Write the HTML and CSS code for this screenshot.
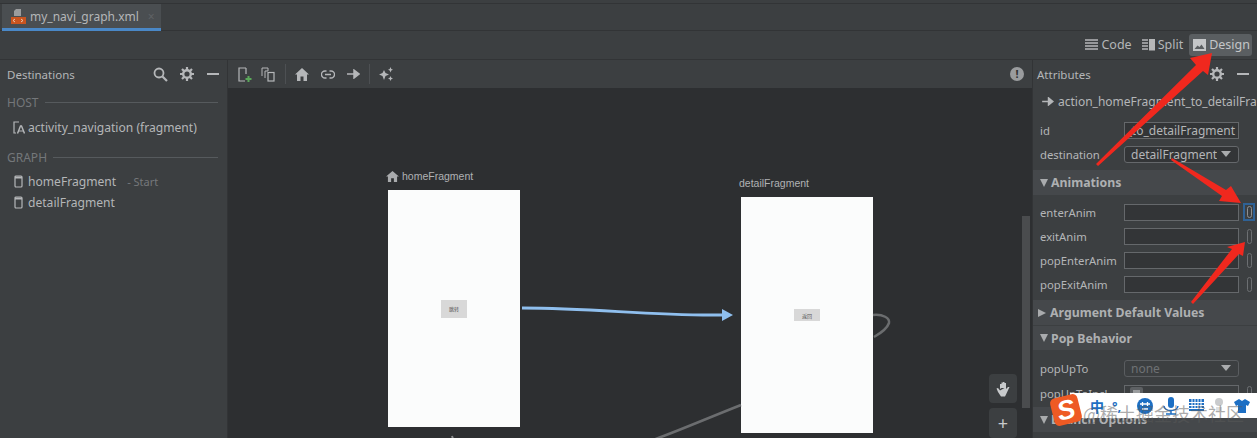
FILE: index.html
```html
<!DOCTYPE html>
<html lang="en">

<head>
    <meta charset="UTF-8">
    <meta name="viewport" content="width=device-width, initial-scale=1.0">
    <title>my_navi_graph.xml</title>
    <link rel="stylesheet" href="styles.css">
</head>

<body>
    <div class="tabbar">
        <div class="tab">
            <svg class="tab-icon" width="16" height="16" viewBox="0 0 16 16">
                <path d="M6 1h5v7H4V3z" fill="#9a9c9e" />
                <rect x="1" y="9" width="15" height="7" fill="#c9541f" />
                <path d="M5 11l-2 1.500L5 14M11 11l2 1.500L11 14" stroke="#e8c9b0" fill="none" />
            </svg>
            <span>my_navi_graph.xml</span>
            <span class="tab-close">&#215;</span>
        </div>
    </div>

    <div class="modebar">
        <div class="mode">
            <svg width="13" height="12" viewBox="0 0 13 12">
                <path d="M0 1h13M0 4h13M0 7h13M0 10h13" stroke="#b5b7b9" stroke-width="1.600" />
            </svg>
            <span>Code</span>
        </div>
        <div class="mode">
            <svg width="13" height="12" viewBox="0 0 13 12">
                <path d="M0 1h6M0 4h6M0 7h6M0 10h6" stroke="#b5b7b9" stroke-width="1.600" />
                <rect x="7" y="0" width="6" height="11.500" fill="#b5b7b9" />
            </svg>
            <span>Split</span>
        </div>
        <div class="mode mode-active">
            <svg width="13" height="12" viewBox="0 0 13 12">
                <path d="M0 0h13v12H0zM1.500 10h10L8.500 5.500 6.500 8 4.500 6.500z" fill="#c4c6c8" fill-rule="evenodd" />
            </svg>
            <span>Design</span>
        </div>
    </div>

    <div class="main">
        <aside class="left">
            <div class="panel-head">
                <span class="panel-title">Destinations</span>
                <div class="head-icons">
                    <svg width="15" height="15" viewBox="0 0 15 15">
                        <circle cx="6" cy="6" r="4.500" fill="none" stroke="#b5b7b9" stroke-width="1.800" />
                        <path d="M9.500 9.500L14 14" stroke="#b5b7b9" stroke-width="2.200" />
                    </svg>
                    <svg width="14" height="14" viewBox="0 0 14 14">
                        <circle cx="7" cy="7" r="3.800" fill="none" stroke="#b5b7b9" stroke-width="2.400" />
                        <path d="M7 0v3M7 11v3M0 7h3M11 7h3M2 2l2 2M10 10l2 2M12 2l-2 2M4 10l-2 2" stroke="#b5b7b9" stroke-width="2.200" />
                    </svg>
                    <span class="dash"></span>
                </div>
            </div>
            <div class="group-label">HOST<i></i></div>
            <div class="dest dest-host">
                <svg width="12" height="13" viewBox="0 0 12 13">
                    <path d="M6 1H1v11h2" fill="none" stroke="#b5b7b9" stroke-width="1.200" />
                    <path d="M4.500 12.500L7.500 5h1l3 7.500" fill="none" stroke="#b5b7b9" stroke-width="1.400" />
                    <path d="M6 10h4" stroke="#b5b7b9" />
                </svg>
                <span>activity_navigation (fragment)</span>
            </div>
            <div class="group-label graph-label">GRAPH<i></i></div>
            <div class="dest">
                <svg width="9" height="13" viewBox="0 0 9 13">
                    <rect x="1" y="1" width="7" height="11" rx="1" fill="none" stroke="#b5b7b9" stroke-width="1.200" />
                    <path d="M1 2.500h7" stroke="#b5b7b9" stroke-width="2" />
                </svg>
                <span>homeFragment</span>
                <span class="dest-note">- Start</span>
            </div>
            <div class="dest">
                <svg width="9" height="13" viewBox="0 0 9 13">
                    <rect x="1" y="1" width="7" height="11" rx="1" fill="none" stroke="#b5b7b9" stroke-width="1.200" />
                    <path d="M1 2.500h7" stroke="#b5b7b9" stroke-width="2" />
                </svg>
                <span>detailFragment</span>
            </div>
        </aside>

        <section class="center">
            <div class="graph-tools">
                <svg width="14" height="15" viewBox="0 0 14 15">
                    <path d="M8 1H1v13h6M8 1v6" fill="none" stroke="#b5b7b9" stroke-width="1.200" />
                    <path d="M10.500 9v6M7.500 12h6" stroke="#5aa85a" stroke-width="2" />
                </svg>
                <svg class="tool-copy" width="15" height="15" viewBox="0 0 15 15">
                    <path d="M1 9V1h6v3" fill="none" stroke="#b5b7b9" />
                    <rect x="7" y="5.500" width="6" height="8.500" fill="none" stroke="#b5b7b9" stroke-width="1.200" />
                    <path d="M4 11V4h3" fill="none" stroke="#b5b7b9" />
                </svg>
                <span class="tool-sep"></span>
                <svg width="14" height="13" viewBox="0 0 14 13">
                    <path d="M7 0L0 6.500h2V13h3.500V8.500h3V13H12V6.500h2z" fill="#b5b7b9" />
                </svg>
                <svg class="tool-wide" width="14" height="9" viewBox="0 0 14 9">
                    <path d="M5.500 1H4a3.500 3.500 0 0 0 0 7h1.500M8.500 1H10a3.500 3.500 0 0 1 0 7H8.500M4 4.500h6" fill="none" stroke="#b5b7b9" stroke-width="1.300" />
                </svg>
                <svg class="tool-wide" width="13" height="10" viewBox="0 0 13 10">
                    <path d="M0 5h9M7 1l5 4-5 4z" fill="#b5b7b9" stroke="#b5b7b9" stroke-width="1.500" />
                </svg>
                <span class="tool-sep"></span>
                <svg width="15" height="14" viewBox="0 0 15 14">
                    <path d="M5 3l1.500 3L10 7.500 6.500 9 5 13 3.500 9 0 7.500 3.500 6zM11.500 0l.8 2 1.700.8-1.700.7-.8 2-.8-2L9 2.800l1.700-.8zM11.500 9l.8 1.700 1.700.8-1.700.7-.8 1.800-.8-1.800-1.700-.7 1.700-.8z" fill="#b5b7b9" />
                </svg>
                <span class="tool-alert">!</span>
            </div>

            <div class="canvas">
                <div class="node node-home">
                    <div class="node-label">
                        <svg width="13" height="11" viewBox="0 0 14 12">
                            <path d="M7 0L0 6h2v6h3.500V8h3v4H12V6h2z" fill="#a9abad" />
                        </svg>
                        <span>homeFragment</span>
                    </div>
                    <div class="phone">
                        <span class="phone-btn btn-home">跳转</span>
                    </div>
                </div>
                <div class="node node-detail">
                    <div class="node-label">detailFragment</div>
                    <div class="phone">
                        <span class="phone-btn btn-detail">返回</span>
                    </div>
                </div>

                <!-- action lines, canvas coords -->
                <svg class="wires" width="804" height="350" viewBox="0 0 804 350">
                    <path d="M294 220C370 220 420 228 494 227" fill="none" stroke="#8fbfee" stroke-width="3" />
                    <path d="M494 221l11 6-11 6z" fill="#8fbfee" />
                    <path d="M645 227C655 226 662 230 661 235 659 241 653 245 646 249" fill="none" stroke="#6b6d6f" stroke-width="2.500" />
                    <path d="M513 317C480 330 450 343 425 352" fill="none" stroke="#6b6d6f" stroke-width="2.500" />
                    <path d="M224 348l1 3" stroke="#8a8c8e" stroke-width="2" />
                </svg>

                <div class="canvas-scroll"></div>
                <div class="zoom-tools">
                    <div class="zoom-btn">
                        <svg width="15" height="16" viewBox="0 0 15 16">
                            <path d="M4 8V3h1.500v4M5.500 7V1.500H7V7M7 7V1h1.500v6M8.500 7V2H10v6l2-2h1.500L10 13.500 9 15.500H5L2 11 .5 7.500 2 7l2 2.500z" fill="#c8cacc" />
                        </svg>
                    </div>
                    <div class="zoom-btn zoom-plus">+</div>
                </div>
            </div>
        </section>

        <aside class="right">
            <div class="panel-head panel-head-attrs">
                <span class="panel-title">Attributes</span>
                <div class="head-icons">
                    <svg width="14" height="14" viewBox="0 0 14 14">
                        <circle cx="7" cy="7" r="3.800" fill="none" stroke="#b5b7b9" stroke-width="2.400" />
                        <path d="M7 0v3M7 11v3M0 7h3M11 7h3M2 2l2 2M10 10l2 2M12 2l-2 2M4 10l-2 2" stroke="#b5b7b9" stroke-width="2.200" />
                    </svg>
                    <span class="dash"></span>
                </div>
            </div>
            <div class="action-row">
                <svg width="12" height="9" viewBox="0 0 13 10">
                    <path d="M0 5h9M7 1l5 4-5 4z" fill="#b5b7b9" stroke="#b5b7b9" stroke-width="1.500" />
                </svg>
                <span class="action-name">action_homeFragment_to_detailFragment</span>
            </div>

            <div class="attr attr-id">
                <label>id</label>
                <div class="field field-text"><span>_to_detailFragment</span></div>
            </div>
            <div class="attr">
                <label>destination</label>
                <div class="field field-select">
                    <span class="field-value">detailFragment</span>
                    <span class="caret"></span>
                </div>
            </div>

            <div class="section section-anim"><span class="tri"></span>Animations</div>
            <div class="attr">
                <label>enterAnim</label>
                <div class="field"></div>
                <span class="pick pick-on"><i></i></span>
            </div>
            <div class="attr">
                <label>exitAnim</label>
                <div class="field"></div>
                <span class="pick"><i></i></span>
            </div>
            <div class="attr">
                <label>popEnterAnim</label>
                <div class="field"></div>
                <span class="pick"><i></i></span>
            </div>
            <div class="attr">
                <label>popExitAnim</label>
                <div class="field"></div>
                <span class="pick"><i></i></span>
            </div>

            <div class="section section-args"><span class="tri tri-closed"></span>Argument Default Values</div>
            <div class="section section-pop"><span class="tri"></span>Pop Behavior</div>
            <div class="attr attr-popup">
                <label>popUpTo</label>
                <div class="field field-select field-dim">
                    <span class="field-value">none</span>
                    <span class="caret"></span>
                </div>
            </div>
            <div class="attr">
                <label>popUpToIncl</label>
                <div class="field field-check"><b></b></div>
                <span class="pick"><i></i></span>
            </div>
            <div class="section section-launch"><span class="tri"></span>Launch Options</div>
        </aside>
    </div>

    <!-- red arrows drawn on the screenshot -->
    <svg class="marks" width="1257" height="438" viewBox="0 0 1257 438">
        <path d="M1096 164L1196 65 1190 58 1212 53 1208 75 1203 71 1098 166z" fill="#f0281e" />
        <path d="M1172 158L1226 190 1231 186 1241 203 1219 201 1222 196 1171 160z" fill="#f0281e" />
        <path d="M1191 302L1232 249 1227 247 1245 242 1243 256 1239 254 1193 304z" fill="#f0281e" />
    </svg>

    <div class="ime">
        <div class="ime-logo">S</div>
        <span class="ime-zh">中</span>
        <span class="ime-dot">°,</span>
        <svg width="16" height="16" viewBox="0 0 16 16">
            <circle cx="8" cy="8" r="8" fill="#1d6fc4" />
            <path d="M3 6h10M5.500 4v4M10.500 4v4M5 11h6" stroke="#fff" stroke-width="1.300" />
        </svg>
        <svg width="16" height="18" viewBox="0 0 16 18">
            <rect x="5" y="0" width="6" height="11" rx="3" fill="#1d6fc4" />
            <path d="M1 9c1 6 13 6 14 0M8 14v3M3 17h10" fill="none" stroke="#1d6fc4" stroke-width="1.500" />
        </svg>
        <svg width="15" height="14" viewBox="0 0 15 14">
            <rect width="15" height="12" fill="#1d6fc4" />
            <path d="M0 3.500h15M0 6.500h15M0 9.500h15M3 0v10M6 0v10M9 0v10M12 0v10" stroke="#fff" />
        </svg>
        <svg width="10" height="16" viewBox="0 0 10 16">
            <circle cx="5" cy="4" r="4" fill="#c9cbcd" />
            <path d="M2 9h6v4H2z" fill="#dddfe0" />
        </svg>
        <svg width="16" height="14" viewBox="0 0 16 14">
            <path d="M5 0L0 3l2 4 2-1v8h8V6l2 1 2-4-5-3-3 2z" fill="#1d6fc4" />
        </svg>
        <span class="ime-mark">@稀土掘金技术社区</span>
    </div>
</body>

</html>
```

FILE: styles.css
```css
* {
    box-sizing: border-box;
}

html,
body {
    height: 438px;
}

body {
    margin: 0;
    overflow: hidden;
    position: relative;
    display: flex;
    flex-direction: column;
    font-family: "Noto Sans", "Open Sans", sans-serif;
    font-size: 12px;
    color: #b4b6b8;
    background-color: #3c3f41;
}

/* tabs */
.tabbar {
    height: 28px;
    margin-top: 3px;
    padding-left: 2px;
    display: flex;
    border-top: 1px solid #323436;
    border-bottom: 1px solid #323436;
}

.tab {
    width: 159px;
    height: 27px;
    padding-left: 8px;
    display: flex;
    align-items: center;
    gap: 4px;
    background-color: #4a4e51;
    border-bottom: 3px solid #4a88c7;
}

.tab-icon {
    flex: none;
}

.tab-close {
    margin-left: 5px;
    color: #5f6265;
}

.modebar {
    height: 29px;
    padding-right: 5px;
    display: flex;
    justify-content: flex-end;
    align-items: center;
    border-bottom: 1px solid #323436;
}

.mode {
    height: 22px;
    padding: 0 2px 0 4px;
    display: flex;
    align-items: center;
    gap: 3px;
    font-size: 12.500px;
    line-height: 22px;
    border-radius: 3px;
}

.mode + .mode {
    margin-left: 4px;
}

.mode-active {
    background-color: #5a5e61;
    color: #c4c6c8;
}

/* three columns */
.main {
    flex: 1;
    min-height: 0;
    display: flex;
}

.left {
    width: 228px;
    flex: none;
    border-right: 1px solid #323436;
}

.center {
    flex: 1;
    min-width: 0;
    display: flex;
    flex-direction: column;
}

.right {
    width: 225px;
    flex: none;
    overflow: hidden;
    border-left: 1px solid #323436;
}

.panel-head {
    height: 28px;
    padding: 0 8px 0 7px;
    display: flex;
    align-items: center;
    justify-content: space-between;
}

.panel-head-attrs {
    padding-left: 4px;
}

.panel-title {
    font-size: 11.500px;
}

.head-icons {
    display: flex;
    align-items: center;
    gap: 12px;
}

.dash {
    width: 12px;
    height: 2px;
    margin-left: 1px;
    background-color: #b5b7b9;
}

.group-label {
    margin: 6px 9px 0 7px;
    height: 17px;
    display: flex;
    align-items: center;
    gap: 6px;
    color: #74777a;
}

.group-label i {
    flex: 1;
    height: 1px;
    background-color: #565a5d;
}

.graph-label {
    margin-top: 11px;
    margin-bottom: 5px;
}

.dest {
    height: 21px;
    padding-left: 14px;
    display: flex;
    align-items: center;
    gap: 5px;
    font-size: 12.100px;
    white-space: nowrap;
}

.dest svg {
    flex: none;
}

.dest-host {
    margin-top: 6px;
    gap: 3px;
    padding-left: 13px;
}

.dest-note {
    margin-left: 6px;
    font-size: 11px;
    color: #75787b;
}

/* graph editor */
.graph-tools {
    height: 28px;
    padding: 0 8px 0 10px;
    display: flex;
    align-items: center;
    gap: 10px;
}

.tool-copy {
    margin-left: -1px;
}

.tool-wide {
    margin-left: 2px;
}

.tool-sep {
    width: 1px;
    height: 20px;
    margin: 0 -1px;
    background-color: #4d5053;
}

.tool-alert {
    width: 14px;
    height: 14px;
    margin-left: auto;
    border-radius: 50%;
    background-color: #9a9c9e;
    color: #2f3133;
    font-size: 11px;
    font-weight: bold;
    line-height: 14px;
    text-align: center;
}

.canvas {
    flex: 1;
    position: relative;
    overflow: hidden;
    background-color: #2d2f31;
}

.node {
    position: absolute;
    width: 132px;
}

.node-home {
    left: 160px;
    top: 80px;
}

.node-detail {
    left: 513px;
    top: 87px;
}

.node-label {
    height: 22px;
    padding-bottom: 6px;
    display: flex;
    align-items: center;
    gap: 3px;
    margin-left: -2px;
    font-family: "Liberation Sans", Arial, sans-serif;
    font-size: 10.500px;
    color: #b0b2b4;
}

.phone {
    height: 237px;
    display: flex;
    align-items: center;
    justify-content: center;
    background-color: #fbfcfc;
}

.node-detail .phone {
    height: 236px;
}

.phone-btn {
    display: flex;
    align-items: center;
    justify-content: center;
    width: 26px;
    font-family: "Noto Sans CJK SC", sans-serif;
    font-size: 5px;
    color: #555;
    background-color: #d8d8d8;
}

.btn-home {
    height: 18px;
}

.btn-detail {
    height: 12px;
}

.wires {
    position: absolute;
    left: 0;
    top: 0;
}

.canvas-scroll {
    position: absolute;
    left: 794px;
    top: 128px;
    width: 8px;
    height: 192px;
    background-color: #4a4c4e;
}

.zoom-tools {
    position: absolute;
    left: 761px;
    top: 286px;
    display: flex;
    flex-direction: column;
    gap: 5px;
}

.zoom-btn {
    width: 28px;
    height: 29px;
    display: flex;
    align-items: center;
    justify-content: center;
    border-radius: 4px;
    background-color: #3c3f41;
}

.zoom-plus {
    height: 30px;
    font-size: 18px;
    line-height: 30px;
    color: #c8cacc;
}

/* attributes panel */
.action-row {
    height: 26px;
    padding-left: 9px;
    display: flex;
    align-items: center;
    gap: 4px;
    white-space: nowrap;
}

.action-row svg {
    flex: none;
}

.attr {
    height: 24px;
    padding-left: 7px;
    display: flex;
    align-items: center;
    font-size: 11.300px;
}

.attr-id {
    margin-top: 4px;
}

.attr label {
    width: 84px;
    flex: none;
    white-space: nowrap;
}

.field {
    width: 115px;
    height: 17px;
    flex: none;
    border: 1px solid #65686b;
    background-color: #333537;
    font-size: 12px;
}

.field-text {
    padding-right: 3px;
    overflow: hidden;
    display: flex;
    justify-content: flex-end;
    align-items: center;
    white-space: nowrap;
}

.field-text span {
    flex: none;
}

.field-select {
    display: flex;
    align-items: center;
    border-radius: 3px;
    white-space: nowrap;
}

.field-value {
    width: 92px;
    padding-left: 6px;
    overflow: hidden;
}

.field-dim {
    color: #6e7174;
    background-color: #3c3f41;
    border-color: #5a5d60;
}

.caret {
    width: 0;
    height: 0;
    margin-left: 4px;
    border-left: 5px solid transparent;
    border-right: 5px solid transparent;
    border-top: 6px solid #a9abad;
}

.field-check {
    background-color: #3c3f41;
    padding: 1px 5px;
}

.field-check b {
    display: block;
    width: 13px;
    height: 13px;
    border: 3px solid #5e6164;
    background-color: #9a9c9e;
    border-radius: 2px;
}

.pick {
    width: 12px;
    height: 18px;
    margin-left: 4px;
    display: flex;
    align-items: center;
    justify-content: center;
}

.pick i {
    display: block;
    width: 5px;
    height: 15px;
    border: 1px solid #6c6f72;
    border-radius: 3px;
}

.pick-on {
    border: 2px solid #2f6296;
}

.pick-on i {
    height: 12px;
    border-color: #8e9092;
}

.section {
    height: 25px;
    padding-left: 7px;
    display: flex;
    align-items: center;
    gap: 3px;
    font-weight: bold;
    font-size: 12.300px;
    background-color: #45484b;
    color: #aeb0b2;
}

.section-anim {
    margin-top: 4px;
    margin-bottom: 5px;
}

.section-args {
    margin-top: 4px;
    padding-left: 5px;
}

.section-pop {
    height: 24px;
    margin-top: 1px;
    margin-bottom: 6px;
}

.section-launch {
    margin-top: 2px;
}

.attr-popup {
    margin-bottom: 1px;
}

.tri {
    width: 0;
    height: 0;
    border-left: 4px solid transparent;
    border-right: 4px solid transparent;
    border-top: 8px solid #a9abad;
}

.tri-closed {
    margin-right: 1px;
    border-top: 4px solid transparent;
    border-bottom: 4px solid transparent;
    border-left: 8px solid #a9abad;
    border-right: 0;
}

/* overlays on the screenshot */
.marks {
    position: absolute;
    left: 0;
    top: 0;
}

.ime {
    position: absolute;
    left: 1070px;
    top: 393px;
    width: 187px;
    height: 25px;
    padding-left: 20px;
    display: flex;
    align-items: center;
    gap: 10px;
    background-color: #fff;
}

.ime-logo {
    position: absolute;
    left: -18px;
    top: 3px;
    width: 28px;
    height: 28px;
    border-radius: 5px;
    background-color: #ee5a24;
    color: #fff;
    font-family: "Liberation Sans", Arial, sans-serif;
    font-size: 27px;
    font-weight: bold;
    font-style: italic;
    line-height: 28px;
    text-align: center;
    transform: rotate(-14deg);
}

.ime-zh {
    font-family: "Noto Sans CJK SC", sans-serif;
    font-size: 14px;
    font-weight: bold;
    color: #1d6fc4;
}

.ime-dot {
    width: 15px;
    margin-left: -2px;
    font-size: 13px;
    font-weight: bold;
    color: #1d6fc4;
}

.ime-mark {
    position: absolute;
    left: 13px;
    top: 10px;
    font-family: "Noto Sans CJK SC", sans-serif;
    font-size: 18px;
    line-height: 20px;
    white-space: nowrap;
    color: rgba(90, 90, 90, 0.5);
}
```
